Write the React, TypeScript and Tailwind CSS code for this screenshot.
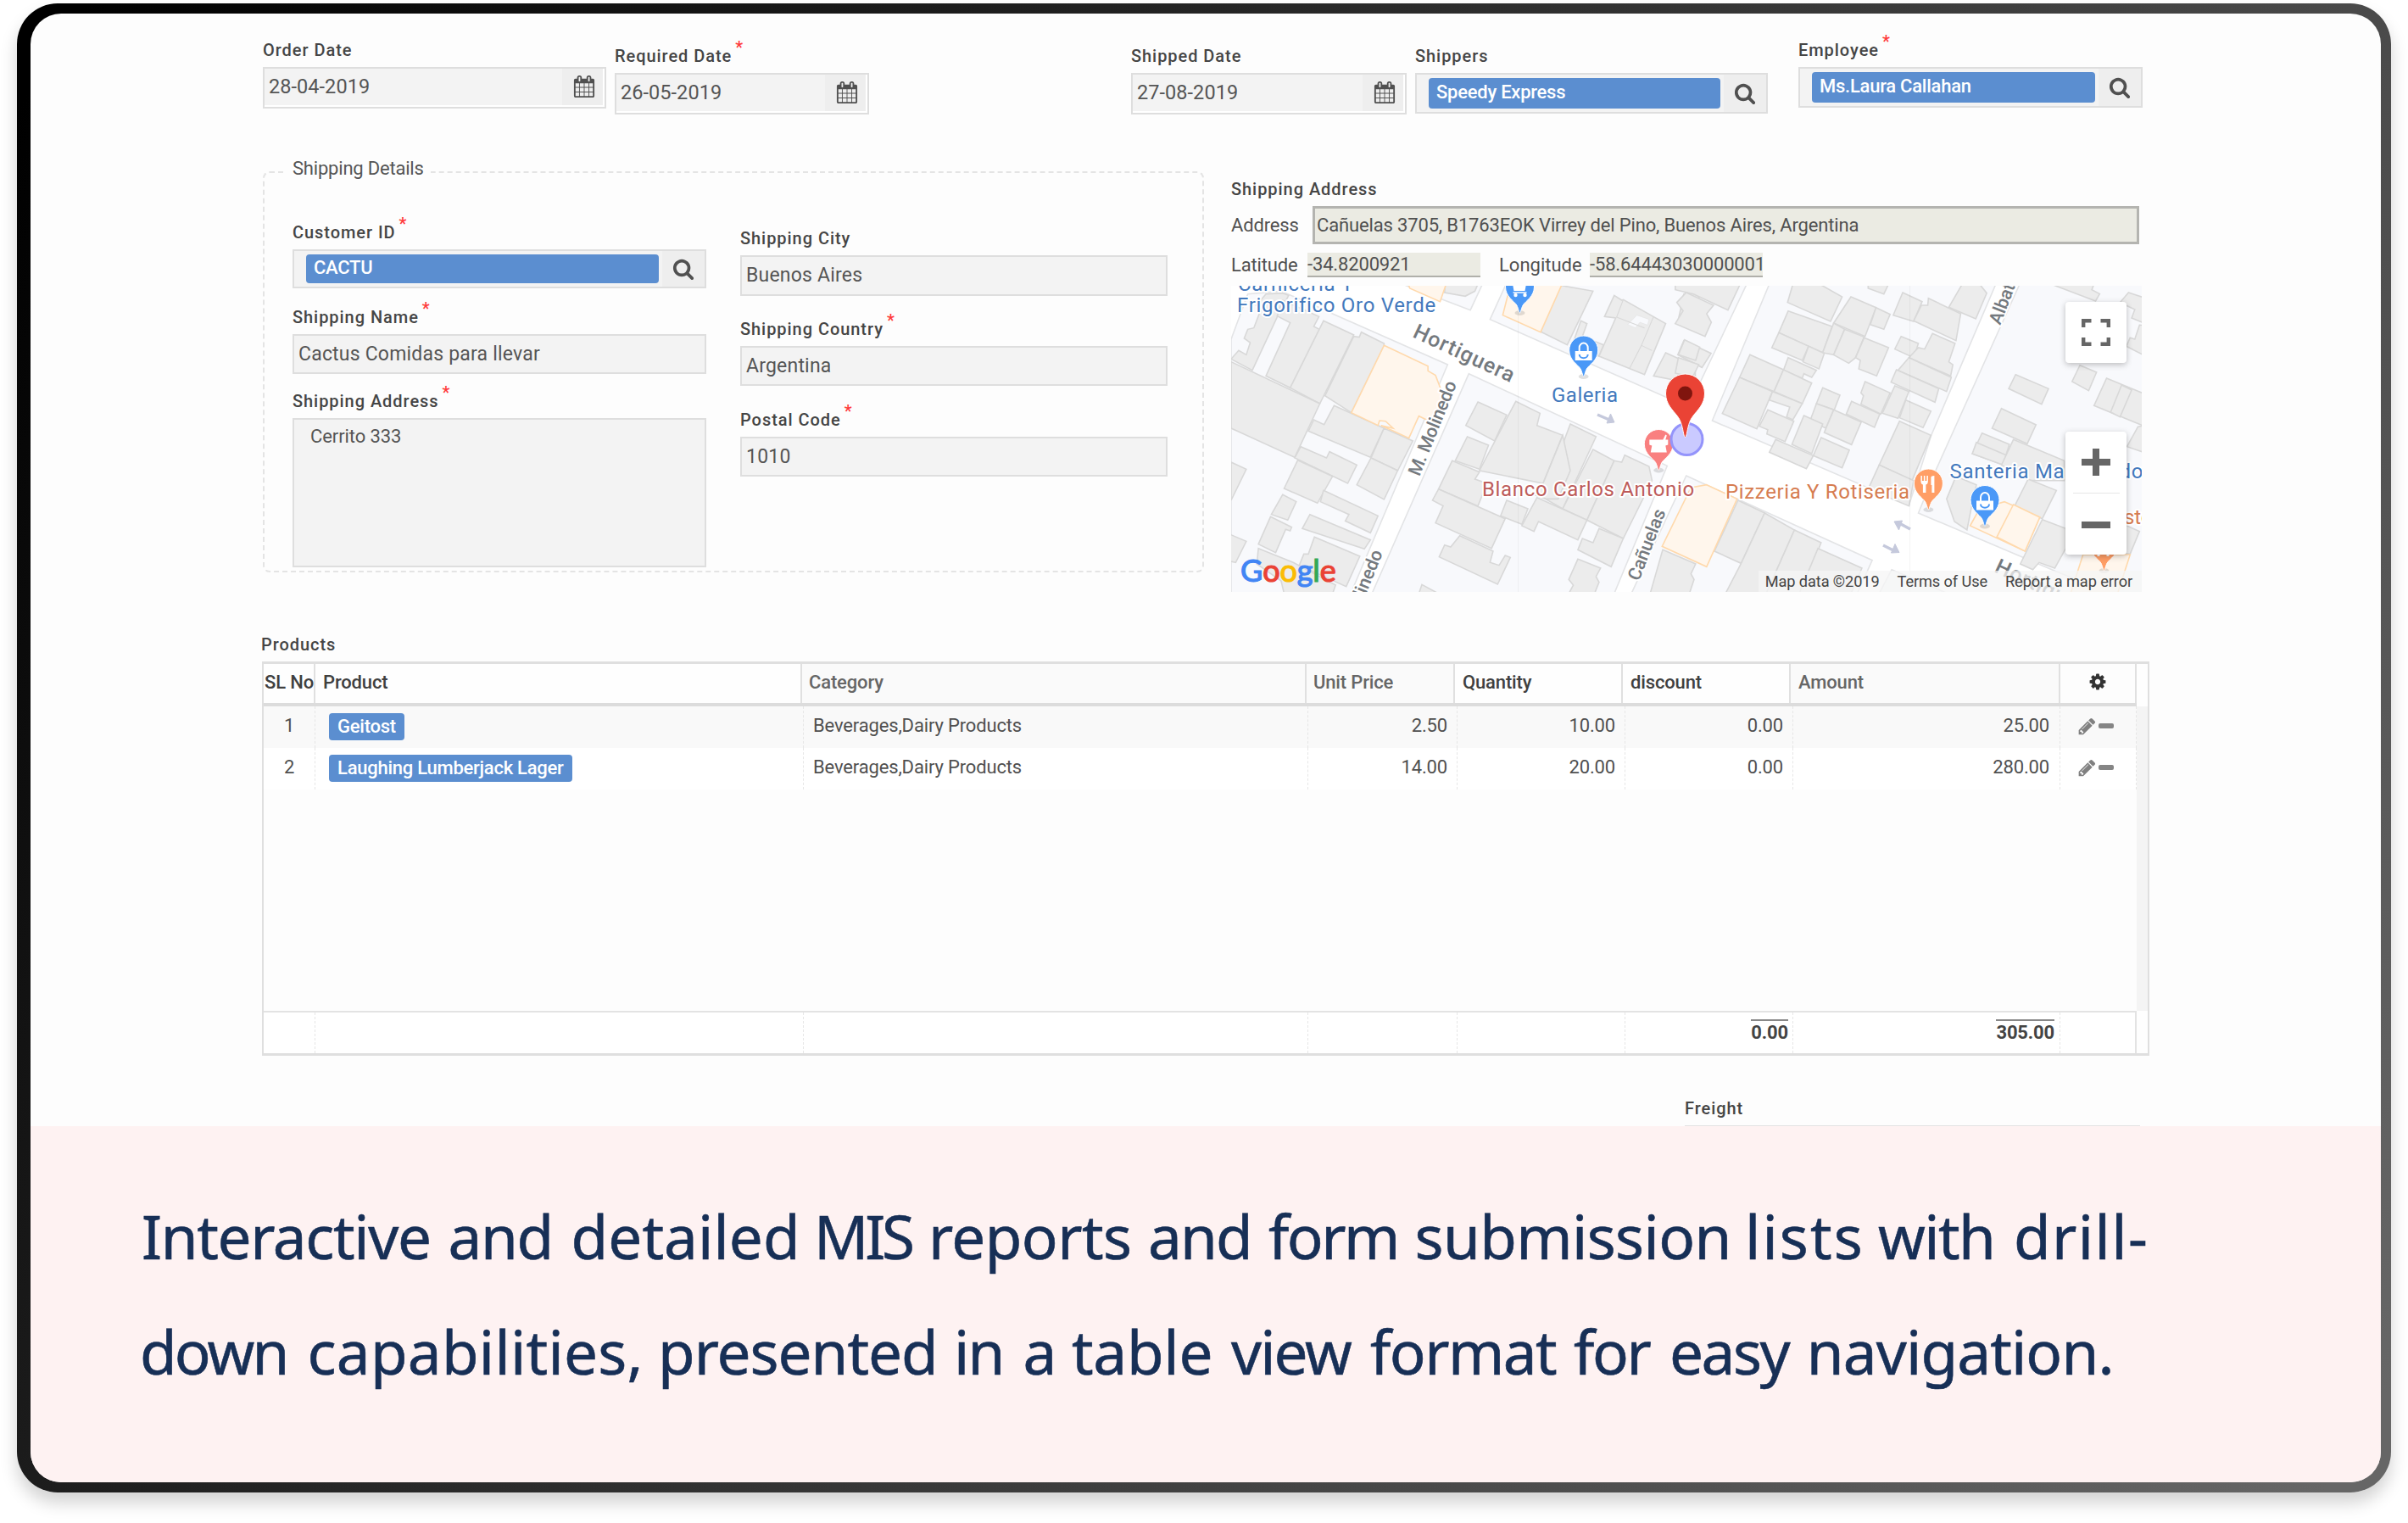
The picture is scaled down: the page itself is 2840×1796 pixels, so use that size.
import type { ReactNode } from "react";

const CALENDAR =
  "M192 1664h288v-288h-288v288zm352 0h320v-288h-320v288zm-352-352h288v-320h-288v320zm352 0h320v-320h-320v320zm-352-384h288v-288h-288v288zm736 736h320v-288h-320v288zm-384-736h320v-288h-320v288zm768 736h288v-288h-288v288zm-384-352h320v-320h-320v320zm-352-864v-288q0-13-9.5-22.5t-22.5-9.5h-64q-13 0-22.5 9.5t-9.5 22.5v288q0 13 9.5 22.5t22.5 9.5h64q13 0 22.5-9.5t9.5-22.5zm736 864h288v-320h-288v320zm-384-384h320v-288h-320v288zm384 0h288v-288h-288v288zm32-480v-288q0-13-9.5-22.5t-22.5-9.5h-64q-13 0-22.5 9.5t-9.5 22.5v288q0 13 9.5 22.5t22.5 9.5h64q13 0 22.5-9.5t9.5-22.5zm384-64v1280q0 52-38 90t-90 38h-1408q-52 0-90-38t-38-90v-1280q0-52 38-90t90-38h128v-96q0-66 47-113t113-47h64q66 0 113 47t47 113v96h384v-96q0-66 47-113t113-47h64q66 0 113 47t47 113v96h128q52 0 90 38t38 90z";
const SEARCH =
  "M1216 832q0-185-131.5-316.5t-316.5-131.5-316.5 131.5-131.5 316.5 131.5 316.5 316.5 131.5 316.5-131.5 131.5-316.5zm512 832q0 52-38 90t-90 38q-54 0-90-38l-343-342q-179 124-399 124-143 0-273.5-55.5t-225-150-150-225-55.5-273.5 55.5-273.5 150-225 225-150 273.5-55.5 273.5 55.5 225 150 150 225 55.5 273.5q0 220-124 399l343 343q37 37 37 90z";
const PENCIL =
  "M491 1536l91-91-235-235-91 91v107h128v128h107zm523-928q0-22-22-22-10 0-17 7l-542 542q-7 7-7 17 0 22 22 22 10 0 17-7l542-542q7-7 7-17zm-54-192l416 416-832 832h-416v-416zm683 96q0 53-37 90l-166 166-416-416 166-165q36-38 90-38 53 0 91 38l235 234q37 39 37 91z";
const COG =
  "M1152 896q0-106-75-181t-181-75-181 75-75 181 75 181 181 75 181-75 75-181zm512-109v222q0 12-8 23t-20 13l-185 28q-19 54-39 91 35 50 107 138 10 12 10 25t-9 23q-27 37-99 108t-94 71q-12 0-26-9l-138-108q-44 23-91 38-16 136-29 186-7 28-36 28h-222q-14 0-24.5-8.5t-11.5-21.5l-28-184q-49-16-90-37l-141 107q-10 9-25 9-14 0-25-11-126-114-165-168-7-10-7-23 0-12 8-23 15-21 51-66.5t54-70.5q-27-50-41-99l-183-27q-13-2-21-12.5t-8-23.5v-222q0-12 8-23t19-13l186-28q14-46 39-92-40-57-107-138-10-12-10-24 0-10 9-23 26-36 98.5-107.5t94.5-71.5q13 0 26 10l138 107q44-23 91-38 16-136 29-186 7-28 36-28h222q14 0 24.5 8.5t11.5 21.5l28 184q49 16 90 37l142-107q9-9 24-9 13 0 25 10 129 119 165 170 7 8 7 22 0 12-8 23-15 21-51 66.5t-54 70.5q26 50 41 98l183 28q13 2 21 12.5t8 23.5z";

function Glyph({ d, className }: { d: string; className: string }) {
  return (
    <svg viewBox="0 0 1792 1792" className={className} fill="currentColor">
      <path d={d} />
    </svg>
  );
}

function Label({ text, required }: { text: string; required?: boolean }) {
  return (
    <div className="h-6 text-[20px] leading-6 font-medium tracking-[0.95px] whitespace-nowrap text-[#454545]">
      {text}
      {required && <span className="relative -top-[10px] ml-[4px] text-[#ff3b3b]">*</span>}
    </div>
  );
}

function Field({ label, required, className, children }: { label: string; required?: boolean; className: string; children: ReactNode }) {
  return (
    <div className={`flex shrink-0 flex-col gap-2 ${className}`}>
      <Label text={label} required={required} />
      {children}
    </div>
  );
}

const boxBase = "flex border-2 border-[#dedede] bg-[#f3f3f3] text-[#555]";

function DateBox({ value }: { value: string }) {
  return (
    <div className={`${boxBase} h-[49px] pr-[2px] pb-[2px] shadow-[inset_-2px_-2px_0_#fff]`}>
      <span className="flex flex-1 items-center pt-[1px] pl-[5px] text-[23.5px] tracking-[0.05px]">{value}</span>
      <span className="flex w-12 items-center justify-center bg-[#eeeeee] pb-[1px] pl-[4px] text-[#505050]">
        <Glyph d={CALENDAR} className="size-[26px]" />
      </span>
    </div>
  );
}

function LookupBox({ value, className }: { value: string; className: string }) {
  return (
    <div className={`${boxBase} ${className}`}>
      <span className="my-[4px] mr-[4px] ml-[14px] flex flex-1 items-center rounded-[4px] bg-[#5b8ed0] pb-[3px] pl-[9px] text-[22px] font-medium tracking-[-0.25px] text-white">
        {value}
      </span>
      <span className="flex w-[50px] items-center justify-center bg-[#eeeeee] pb-[1px] text-[#505050]">
        <Glyph d={SEARCH} className="size-[26px]" />
      </span>
    </div>
  );
}

function TextBox({ value, className }: { value: string; className: string }) {
  return <div className={`${boxBase} items-center pt-[1px] pl-[5px] text-[23px] tracking-[0.2px] ${className}`}>{value}</div>;
}

function poly(points: string, key: number, fill: string, stroke: string) {
  return <polygon key={key} points={points} fill={fill} stroke={stroke} strokeWidth="1.6" vectorEffect="non-scaling-stroke" />;
}

const blocksWest = [
  "35,600 90,440 200,430 330,490 370,510 750,690 430,1500 35,1500",
  "820,722 1475,1048 1300,1500 500,1500",
  "600,405 825,497 865,405",
  "945,400 890,530 1545,840 1740,400",
];
const shopsWest = [
  "540,622 685,695 685,712 710,728 732,790 730,830 690,890 655,872 622,950 530,905 570,915 545,890 525,888 520,905 432,860",
  "620,405 745,405 725,467 625,420",
  "958,405 1128,405 1057,575 932,515",
];
const housesWest = [
  "35,670 60,640 85,655 98,612 78,597 90,565 110,560 135,490 118,480 150,440 205,437 225,445 190,515 105,710",
  "150,730 230,542 187,518 205,462 325,520 308,555 330,567 230,772",
  "340,535 440,585 328,828 230,772",
  "458,593 465,575 540,615 540,625 432,860 345,800 440,590",
  "35,680 328,828 245,1018 35,915",
  "375,835 540,915 495,1018 290,925 308,885 342,902",
  "540,915 635,960 585,1065 497,1020",
  "497,1020 585,1065 540,1167 450,1115",
  "265,980 350,1020 360,998 450,1045 420,1110 245,1020",
  "255,1028 370,1085 320,1180 210,1128",
  "340,1135 520,1225 495,1285 412,1243 424,1220 330,1175",
  "205,1150 250,1175 222,1240 168,1220",
  "165,1228 235,1265 230,1278 215,1273 182,1355 125,1325",
  "295,1220 495,1310 475,1342 270,1270",
  "310,1300 460,1368 415,1475 260,1400 275,1360 290,1360",
  "35,1035 85,1060 35,1170",
  "30,1290 85,1315 50,1390 30,1385",
  "125,1340 240,1390 380,1470 370,1500 210,1500 200,1455 120,1395",
  "742,405 850,405 840,430 808,448 740,435",
  "1125,405 1130,411 1230,430 1145,620 1057,573",
  "1190,535 1210,545 1195,590 1265,620 1250,660 1165,610",
  "1300,445 1325,462 1330,460 1470,545 1400,725 1250,660 1305,525 1268,520",
  "1495,405 1568,440 1640,405",
  "1560,430 1580,440 1580,575 1510,540 1530,440",
  "1530,605 1620,650 1590,700 1510,655",
  "1470,648 1568,695 1568,765 1500,745 1430,730",
  "850,822 945,868 905,960 810,905",
  "975,820 1055,862 1045,905 1130,940 1065,1110 855,1065",
  "1155,900 1240,945 1130,1200 1065,1160",
  "1230,990 1300,1030 1210,1240 1130,1200",
  "1335,1010 1415,1050 1425,1100 1330,1305 1210,1240 1300,1030 1325,1035",
  "1250,1270 1330,1305 1290,1405 1180,1345 1195,1305 1230,1320",
  "815,945 885,975 855,1060 775,1030",
  "765,1030 855,1070 840,1095 880,1110 850,1190 720,1130",
  "1130,940 1065,1110 1035,1150 1075,1165 1115,1165 1155,1065",
  "720,1130 940,1235 895,1340 710,1250 735,1190 700,1170",
  "945,1170 1015,1200 995,1255 925,1225",
  "1045,1160 1210,1240 1180,1310 1050,1245 1035,1280 995,1260",
  "790,1295 900,1350 890,1390 920,1400 940,1365 957,1372 915,1467 722,1370 740,1328 760,1335",
  "1180,1378 1255,1410 1240,1440 1250,1460 1235,1500 1150,1500 1165,1470 1150,1450",
  "665,1468 720,1500 655,1500",
];

const blocksEast = [
  "290,405 108,888 735,1188 806,940 1012,405",
  "1088,405 822,1060 765,1215 1200,1420 1380,1500 1500,1560 1500,405",
  "25,1083 618,1382 570,1500 -150,1500",
  "680,1415 860,1500 640,1500",
];
const shopsEast = [
  "90,1115 187,1165 90,1405 -52,1333 40,1125",
  "1040,1175 1152,1230 1105,1350 930,1260 960,1200",
  "1068,1185 1152,1230 1105,1350 1015,1300",
  "1290,1362 1440,1362 1400,1500 1250,1500",
];
const housesEast = [
  "-10,405 197,405 158,497 48,440 -10,425",
  "25,435 112,480 90,510 105,540 85,590 -10,545 15,500 -5,470",
  "20,602 68,628 55,675 0,655",
  "0,665 65,690 45,735 -10,720",
  "365,405 450,405 522,450 485,537 348,470",
  "605,405 670,405 655,440 605,420",
  "350,500 490,555 460,648 320,577",
  "320,577 415,625 395,675 298,630",
  "550,450 630,488 595,590 495,543",
  "630,488 675,512 655,565 612,548",
  "495,543 530,565 495,655 460,648",
  "530,565 592,592 565,665 543,685 495,655",
  "592,595 670,630 632,730 575,705 580,675 565,665",
  "415,625 465,650 448,705 397,680",
  "350,665 440,710 425,735 400,722 395,738 335,710",
  "228,655 335,708 305,785 195,735",
  "335,708 425,755 395,828 305,785",
  "195,735 300,785 250,917 140,863",
  "300,785 395,828 365,885 345,875 355,840 290,815",
  "285,850 368,890 340,962 282,935 285,920 258,908",
  "460,772 515,798 497,850 440,828",
  "440,828 495,850 470,915 420,888",
  "400,870 460,900 425,1005 362,972",
  "495,850 583,893 552,973 465,930",
  "455,948 545,992 522,1055 430,1012",
  "310,955 430,1012 408,1058 290,1000",
  "595,750 675,790 645,865 582,830 590,800 582,790",
  "552,820 642,865 625,912 535,865",
  "690,765 735,785 700,880 650,862",
  "725,815 805,855 780,913 705,878",
  "715,435 777,467 750,537 685,515",
  "797,455 900,510 885,605 750,535 775,480 795,480",
  "905,405 960,405 983,437 948,528 862,487",
  "710,590 765,615 750,665 690,635",
  "810,580 882,615 862,680 875,690 868,730 735,665 765,630 785,635",
  "735,665 870,735 855,785 700,710",
  "695,708 830,775 818,823 678,752",
  "705,890 805,940 745,1100 640,1045",
  "640,1045 750,1100 735,1190 605,1130",
  "1075,725 1180,775 1158,830 1053,775",
  "1030,845 1140,903 1112,970 1000,915",
  "968,932 1055,972 1035,1045 937,1005",
  "950,965 1045,1010 1035,1045 937,1005",
  "1068,955 1230,1030 1230,1100 1120,1100 1030,1045",
  "1280,692 1333,717 1308,782 1255,750",
  "1365,738 1490,795 1490,910 1325,835",
  "1413,762 1445,780 1408,875 1378,858",
  "1200,405 1325,405 1318,425 1343,440 1330,465 1195,408",
  "1435,435 1490,455 1490,545 1445,525 1455,495 1408,470",
  "1470,550 1490,552 1490,660 1428,625 1440,595 1455,600",
  "1465,910 1490,905 1490,1003 1430,980",
  "885,1085 950,1115 935,1190 920,1275 880,1245 855,1165",
  "1115,1095 1205,1135 1160,1235 1072,1190",
  "1160,1238 1235,1270 1235,1340 1200,1410 1150,1390 1130,1415 1090,1395 1110,1350",
  "1380,1235 1470,1280 1440,1360 1380,1350",
  "190,1170 275,1215 200,1393 115,1350",
  "275,1215 370,1275 280,1500 150,1500 200,1393",
  "370,1275 455,1320 390,1500 280,1500",
  "445,1340 585,1410 550,1500 385,1500",
  "-50,1345 55,1395 40,1430 50,1450 35,1500 -90,1500",
];

function Pin({ x, y, color, children }: { x: number; y: number; color: string; children?: ReactNode }) {
  return (
    <g transform={`translate(${x} ${y})`}>
      <ellipse cx="0" cy="31" rx="6" ry="3" fill="#000" opacity="0.12" />
      <path
        d="M0 31C-1 31-1.6 26-3.6 22C-6.6 17-17 12-17 0A17 17 0 0 1 17 0C17 12 6.6 17 3.6 22C1.6 26 1 31 0 31Z"
        fill={color}
        stroke="#fff"
        strokeWidth="1"
      />
      {children}
    </g>
  );
}

const bag = (
  <g>
    <path d="M-10 1H10V12H-10Z" fill="#fff" />
    <path d="M-5 2V-3A5 5.500 0 0 1 5 -3V2" fill="none" stroke="#fff" strokeWidth="2" />
    <path d="M-5 5A5 4.200 0 0 0 5 5" fill="none" stroke="#4a98f7" strokeWidth="2" />
  </g>
);

function CityMap() {
  return (
    <svg width="1074" height="361" viewBox="0 0 1074 361" className="block font-[Roboto]">
      <rect width="1074" height="361" fill="#ffffff" />
      <g transform="translate(-12.5 -137) scale(0.35714 0.33333)">
        {blocksWest.map((p, i) => poly(p, i, "#f8f9fc", "#e3e4e6"))}
        {housesWest.map((p, i) => poly(p, i, "#ececec", "#d8d8d8"))}
        {shopsWest.map((p, i) => poly(p, i, "#fff6ec", "#ffd9ac"))}
        <polygon points="1375,515 1415,530 1410,550 1385,540 1370,560 1345,548" fill="#f8f9fc" stroke="#d8d8d8" />
        <path d="M1330 460L1308 522L1400 560M1430 520L1390 622L1425 640M1390 622L1350 705M1130 940L1065 1110" fill="none" stroke="#d8d8d8" strokeWidth="3" />
      </g>
      <g transform="translate(527.5 -137) scale(0.36996 0.33333)">
        {blocksEast.map((p, i) => poly(p, i, "#f8f9fc", "#e3e4e6"))}
        {housesEast.map((p, i) => poly(p, i, "#ececec", "#d8d8d8"))}
        {shopsEast.map((p, i) => poly(p, i, "#fff6ec", "#ffd9ac"))}
      </g>
      <g stroke="#000" strokeOpacity="0.04">
        <path d="M338.500 0V361M800.500 0V361" />
      </g>
      <g fill="#c5c9dc" stroke="#c5c9dc">
        <path d="M432 152L446 158" strokeWidth="3.500" />
        <path d="M452 161L443 162L447.500 151Z" />
        <path d="M801 287L788 280" strokeWidth="3.500" />
        <path d="M782 278L791.500 277L787.500 288Z" />
        <path d="M769 306L781 312" strokeWidth="3.500" />
        <path d="M788 314.500L778.500 315L783 304.500Z" />
      </g>
      <Pin x={340.5} y={1} color="#4a98f7">
        <path d="M-9 -6H8L6 5H-7Z" fill="#fff" />
        <circle cx="-5" cy="10" r="2.200" fill="#fff" />
        <circle cx="6" cy="10" r="2.200" fill="#fff" />
        <path d="M-8 7H8" stroke="#fff" strokeWidth="1.500" />
      </Pin>
      <Pin x={415.7} y={76} color="#4a98f7">
        {bag}
      </Pin>
      <Pin x={504.3} y={186.5} color="#f98080">
        <path d="M-11 -5H5L8 -11L9.500 -10L8 -5H11V1L8 2L9.500 10H-9.500L-8 2L-11 1Z" fill="#fff" />
      </Pin>
      <circle cx="537.5" cy="181" r="18.500" fill="#8080ff" fillOpacity="0.42" stroke="#9494fb" strokeWidth="3" />
      <Pin x={822.4} y={233} color="#ff9e66">
        <path d="M-9 -9V-3Q-9 1 -6.500 1.500V11H-3V1.500Q-0.500 1 -0.500 -3V-9H-2V-3H-4V-9H-5.500V-3H-7.500V-9ZM3 -7Q3 -9 7 -9V11H4V2H3Z" fill="#fff" />
      </Pin>
      <Pin x={889} y={252.5} color="#4a98f7">
        {bag}
      </Pin>
      <Pin x={1029.5} y={305} color="#ff9e66">
        <path d="M-8 -9V14H-5V-9ZM3 -9V14H6V-9Z" fill="#fff" />
      </Pin>
      <path
        d="M535.500 178.500C533 178.500 533.500 163 526.500 154C521.500 147 512.500 140 512.500 127A23 23 0 0 1 558.500 127C558.500 140 549.500 147 544.500 154C537.500 163 538 178.500 535.500 178.500Z"
        fill="#ea4335"
        stroke="#fff"
        strokeWidth="1"
      />
      <circle cx="535.500" cy="127" r="8.500" fill="#80150e" />
      <g paintOrder="stroke" stroke="#fff" strokeWidth="4" strokeLinejoin="round" fontSize="24">
        <g fill="#4379bd" letterSpacing="0.7">
          <text x="8" y="6">Carniceria Y</text>
          <text x="7" y="30.500">Frigorifico Oro Verde</text>
          <text x="378" y="136.500" letterSpacing="0.5">Galeria</text>
          <text x="847.500" y="226.500">Santeria Ma</text>
          <text x="1047.500" y="226.500">do</text>
        </g>
        <text x="296" y="247.500" fill="#bd5b5a" letterSpacing="0.66">Blanco Carlos Antonio</text>
        <text x="583" y="250.500" fill="#d67c50" letterSpacing="0.64">Pizzeria Y Rotiseria</text>
        <text x="1053" y="281" fill="#d67c50">sto</text>
        <g fill="#74797e" fontWeight="500">
          <text transform="translate(213 60) rotate(25)" fontSize="25" letterSpacing="1">Hortiguera</text>
          <text transform="translate(222 225.500) rotate(-68)" fontSize="21.500">M. Molinedo</text>
          <text transform="translate(481 349) rotate(-69)" fontSize="21.500">Cañuelas</text>
          <text transform="translate(179 315) rotate(-68)" fontSize="21.500" textAnchor="end">M. Molinedo</text>
          <text transform="translate(907 47) rotate(-69)" fontSize="21.500">Albatros</text>
          <text transform="translate(899 337) rotate(25)" fontSize="25" letterSpacing="1">Hortiguera</text>
        </g>
      </g>
    </svg>
  );
}

function MapPanel() {
  return (
    <div className="relative mt-[10px] h-[361px] w-[1074px] overflow-hidden">
      <CityMap />
      <div className="absolute bottom-[4px] left-[11px] flex text-[36px] leading-[44px] font-[Lato] [-webkit-text-stroke:1.2px_currentColor]">
        <span className="text-[#4285f4]">G</span>
        <span className="text-[#ea4335]">o</span>
        <span className="text-[#fbbc05]">o</span>
        <span className="text-[#4285f4]">g</span>
        <span className="text-[#34a853]">l</span>
        <span className="text-[#ea4335]">e</span>
      </div>
      <div className="absolute right-0 bottom-0 flex h-[25px] items-center gap-[21px] bg-[#f5f5f5]/75 pr-[11px] pl-[8px] text-[18.2px] tracking-[-0.1px] text-[#444]">
        <span>Map data ©2019</span>
        <span>Terms of Use</span>
        <span>Report a map error</span>
      </div>
      <div className="absolute top-[19px] left-[984px] flex h-[72px] w-[72px] items-center justify-center rounded-[4px] bg-white shadow-[0_2px_7px_rgba(0,0,0,0.25)]">
        <svg width="34" height="32" viewBox="0 0 34 32" fill="none" stroke="#666" strokeWidth="4.400">
          <path d="M2.200 10V2.200H11.500M22.500 2.200H31.800V10M31.800 22V29.800H22.500M11.500 29.800H2.200V22" />
        </svg>
      </div>
      <div className="absolute top-[172px] left-[984px] flex h-[145px] w-[72px] flex-col items-center rounded-[4px] bg-white shadow-[0_2px_7px_rgba(0,0,0,0.25)]">
        <div className="flex h-[72px] items-center">
          <svg width="34" height="32" viewBox="0 0 34 32" stroke="#666" strokeWidth="8">
            <path d="M0 16H34M17 0V32" />
          </svg>
        </div>
        <div className="h-[1px] w-[55px] bg-[#e6e6e6]" />
        <div className="flex flex-1 items-center pt-[1px]">
          <div className="h-[8px] w-[34px] bg-[#666]" />
        </div>
      </div>
    </div>
  );
}

const headCells = [
  { text: "SL No", cell: "w-[61px] pl-[1px]", bold: true },
  { text: "Product", cell: "w-[574px] pl-[9px]", bold: true },
  { text: "Category", cell: "w-[595px] pl-[8px] bg-[#fafafa]", bold: false },
  { text: "Unit Price", cell: "w-[175px] pl-[8px] bg-[#fafafa]", bold: false },
  { text: "Quantity", cell: "w-[198px] pl-[9px]", bold: true },
  { text: "discount", cell: "w-[198px] pl-[9px]", bold: true },
  { text: "Amount", cell: "w-[318px] pl-[9px] bg-[#fafafa]", bold: false },
];

const rows = [
  { no: "1", product: "Geitost", category: "Beverages,Dairy Products", price: "2.50", qty: "10.00", discount: "0.00", amount: "25.00", tone: "bg-[#f9f9f9]" },
  { no: "2", product: "Laughing Lumberjack Lager", category: "Beverages,Dairy Products", price: "14.00", qty: "20.00", discount: "0.00", amount: "280.00", tone: "bg-white" },
];

const bodyCell = "flex shrink-0 items-center border-r border-dashed border-[#e6e6e6]";
const numCell = "flex shrink-0 items-center justify-end border-r border-dashed border-[#e6e6e6] pb-[5px]";

function ProductsTable() {
  return (
    <div className="ml-[273px] flex h-[465px] w-[2226px] border-t-[3px] border-r-2 border-b-[3px] border-l-2 border-[#dfdfdf] text-[22px] tracking-[-0.15px] text-[#505050]">
      <div className="flex w-[2209px] shrink-0 flex-col">
        <div className="flex h-[50px] shrink-0 border-b-[4px] border-[#dcdcdc]">
          {headCells.map((h) => (
            <div
              key={h.text}
              className={`flex shrink-0 items-center border-r-2 border-[#e0e0e0] pb-[3px] whitespace-nowrap ${h.cell} ${h.bold ? "bg-[#fefefe] font-medium text-[#404040]" : "font-medium text-[#666]"}`}
            >
              {h.text}
            </div>
          ))}
          <div className="flex flex-1 items-center justify-center border-r-2 border-[#e0e0e0] pb-[4px] text-[#333]">
            <Glyph d={COG} className="size-[22px]" />
          </div>
        </div>
        {rows.map((r) => (
          <div key={r.no} className={`flex h-[49px] shrink-0 ${r.tone}`}>
            <div className={`${bodyCell} w-[61px] justify-center pb-[5px]`}>{r.no}</div>
            <div className={`${bodyCell} w-[576px] pb-[2px] pl-[16px]`}>
              <span className="flex h-8 items-center rounded-[4px] bg-[#5b8ed0] px-[10px] font-medium tracking-[-0.25px] text-white">{r.product}</span>
            </div>
            <div className={`${bodyCell} w-[595px] pb-[5px] pl-[11px]`}>{r.category}</div>
            <div className={`${numCell} w-[176px] pr-[11px]`}>{r.price}</div>
            <div className={`${numCell} w-[198px] pr-[11px]`}>{r.qty}</div>
            <div className={`${numCell} w-[198px] pr-[11px]`}>{r.discount}</div>
            <div className={`${numCell} w-[315px] pr-[12px]`}>{r.amount}</div>
            <div className="flex flex-1 items-center gap-[2px] border-r border-dashed border-[#e6e6e6] pb-[3px] pl-[20px] text-[#808080]">
              <Glyph d={PENCIL} className="size-[23px]" />
              <span className="h-[6px] w-[18px] rounded-[2px] bg-[#858585]" />
            </div>
          </div>
        ))}
        <div className="flex-1" />
        <div className="flex h-[50px] shrink-0 border-t-2 border-r-2 border-[#e3e3e3] bg-white font-bold text-[#444]">
          <div className={`${bodyCell} w-[61px]`} />
          <div className={`${bodyCell} w-[576px]`} />
          <div className={`${bodyCell} w-[595px]`} />
          <div className={`${bodyCell} w-[176px]`} />
          <div className={`${bodyCell} w-[198px]`} />
          <div className={`${bodyCell} w-[198px] items-start justify-end pt-[8px] pr-[5px]`}>
            <span className="border-t-2 border-[#888] leading-[28px]">0.00</span>
          </div>
          <div className={`${bodyCell} w-[315px] items-start justify-end pt-[8px] pr-[6px]`}>
            <span className="border-t-2 border-[#888] leading-[28px]">305.00</span>
          </div>
        </div>
      </div>
      <div className="flex flex-1 flex-col">
        <div className="h-[50px] bg-[#fefefe]" />
        <div className="flex-1 bg-[#f4f4f4]" />
        <div className="h-[50px] bg-[#fefefe]" />
      </div>
    </div>
  );
}

const captionTop = [
  { word: "Interactive ", fit: "w-[361.5px] tracking-[-1.35px]" },
  { word: "and ", fit: "w-[145px] tracking-[-1.35px]" },
  { word: "detailed ", fit: "w-[286.5px] tracking-[0.09px]" },
  { word: "MIS ", fit: "w-[135px] tracking-[-4.2px]" },
  { word: "reports ", fit: "w-[259px] tracking-[-0.59px]" },
  { word: "and ", fit: "w-[142px] tracking-[-1.8px]" },
  { word: "form ", fit: "w-[172.5px] tracking-[-2.57px]" },
  { word: "submission ", fit: "w-[389.5px] tracking-[-0.62px]" },
  { word: "lists ", fit: "w-[157px] tracking-[2.1px]" },
  { word: "with ", fit: "w-[160px] tracking-[-1.59px]" },
  { word: "drill-", fit: "tracking-[1.4px]" },
];
const captionBottom = [
  { word: "down ", fit: "w-[197.5px] tracking-[-2.84px]" },
  { word: "capabilities, ", fit: "w-[413.6px] tracking-[0.25px]" },
  { word: "presented ", fit: "w-[348.8px] tracking-[-1.03px]" },
  { word: "in ", fit: "w-[81.6px] tracking-[-1.72px]" },
  { word: "a ", fit: "w-[57.4px]" },
  { word: "table ", fit: "w-[188.2px] tracking-[-0.21px]" },
  { word: "view ", fit: "w-[163.9px] tracking-[-2px]" },
  { word: "format ", fit: "w-[240px] tracking-[-1.58px]" },
  { word: "for ", fit: "w-[113px] tracking-[-2.44px]" },
  { word: "easy ", fit: "w-[161.9px] tracking-[-2.46px]" },
  { word: "navigation.", fit: "tracking-[-0.88px]" },
];

function CaptionLine({ words, className }: { words: { word: string; fit: string }[]; className: string }) {
  return (
    <p className={`flex h-[136px] whitespace-pre ${className}`}>
      {words.map((w, i) => (
        <span key={i} className={`shrink-0 ${w.fit}`}>
          {w.word}
        </span>
      ))}
    </p>
  );
}

export default function App() {
  return (
    <div className="h-[1796px] w-[2840px] overflow-hidden bg-white pt-1 pl-5 font-[Roboto,sans-serif]">
      <div className="h-[1756px] w-[2800px] rounded-[48px] bg-[linear-gradient(122deg,#000_2%,#666_98%)] pt-3 pr-3 pb-3 pl-4 shadow-[0_12px_20px_rgba(0,0,0,0.18)]">
        <div className="flex h-full flex-col overflow-hidden rounded-[36px] bg-[#fdfdfd]">
          <div className="h-[1312px] shrink-0">
            <div className="flex h-[174px] items-start pt-[31px] pl-[274px]">
              <Field label="Order Date" className="w-[405px]">
                <DateBox value="28-04-2019" />
              </Field>
              <Field label="Required Date" required className="mt-[7px] ml-[10px] w-[300px]">
                <DateBox value="26-05-2019" />
              </Field>
              <Field label="Shipped Date" className="mt-[7px] ml-[309px] w-[325px]">
                <DateBox value="27-08-2019" />
              </Field>
              <Field label="Shippers" className="mt-[7px] ml-[10px] w-[416px]">
                <LookupBox value="Speedy Express" className="h-12" />
              </Field>
              <Field label="Employee" required className="ml-[36px] w-[406px]">
                <LookupBox value="Ms.Laura Callahan" className="h-12" />
              </Field>
            </div>

            <div className="flex h-[542px] items-start pl-[274px]">
              <div className="mt-[12px] flex h-[473px] w-[1110px] flex-col rounded-[8px] border-2 border-dashed border-[#e4e4e4]">
                <div className="-mt-[20px] ml-[25px] h-[30px] w-fit bg-[#fdfdfd] px-[8px] text-[22px] leading-[29px] tracking-[-0.2px] text-[#555]">
                  Shipping Details
                </div>
                <div className="flex gap-[40px] pl-[33px]">
                  <div className="flex w-[488px] flex-col pt-[48px]">
                    <Field label="Customer ID" required className="w-full">
                      <LookupBox value="CACTU" className="h-[46px]" />
                    </Field>
                    <Field label="Shipping Name" required className="mt-[22px] w-full">
                      <TextBox value="Cactus Comidas para llevar" className="h-[47px]" />
                    </Field>
                    <Field label="Shipping Address" required className="mt-[20px] w-full">
                      <div className={`${boxBase} h-[176px] pt-[6px] pl-[19px] text-[22px] leading-[28px] tracking-[-0.1px]`}>Cerrito 333</div>
                    </Field>
                  </div>
                  <div className="flex w-[504px] flex-col pt-[55px]">
                    <Field label="Shipping City" className="w-full">
                      <TextBox value="Buenos Aires" className="h-[48px]" />
                    </Field>
                    <Field label="Shipping Country" required className="mt-[27px] w-full">
                      <TextBox value="Argentina" className="h-[47px]" />
                    </Field>
                    <Field label="Postal Code" required className="mt-[28px] w-full">
                      <TextBox value="1010" className="h-[47px]" />
                    </Field>
                  </div>
                </div>
              </div>

              <div className="ml-[32px] flex w-[1074px] flex-col pt-[21px] text-[22px] tracking-[-0.15px] text-[#505050]">
                <Label text="Shipping Address" />
                <div className="mt-[8px] flex h-[45px] items-center">
                  <span className="w-[96px] pb-[1px]">Address</span>
                  <div className="flex h-[45px] w-[975px] items-center border-[3px] border-[#b4b4b0] bg-[#ebebe3] pb-[1px] pl-[2px] whitespace-nowrap">
                    Cañuelas 3705, B1763EOK Virrey del Pino, Buenos Aires, Argentina
                  </div>
                </div>
                <div className="mt-[10px] flex h-[29px] items-center">
                  <span className="w-[90px]">Latitude</span>
                  <div className="flex h-[29px] w-[204px] items-center border-b-2 border-[#b0b0aa] bg-[#ebebe3] pb-[1px]">-34.8200921</div>
                  <span className="ml-[22px] w-[107px] tracking-normal">Longitude</span>
                  <div className="flex h-[29px] w-[204px] items-center border-b-2 border-[#b0b0aa] bg-[#ebebe3] pb-[1px]">-58.64443030000001</div>
                </div>
                <MapPanel />
              </div>
            </div>

            <div className="mt-[16px] mb-[8px] ml-[272px]">
              <Label text="Products" />
            </div>
            <ProductsTable />
            <div className="mt-[50px] ml-[1951px] flex h-[33px] w-[537px] flex-col border-b border-[#e2e2e2]">
              <Label text="Freight" />
            </div>
          </div>

          <div className="flex-1 bg-[#fef2f2] pt-[62px] text-[71px] leading-[136px] text-[#172f56] font-['Noto_Sans',sans-serif] [-webkit-text-stroke:0.6px_#172f56]">
            <CaptionLine words={captionTop} className="ml-[131px]" />
            <CaptionLine words={captionBottom} className="ml-[129px]" />
          </div>
        </div>
      </div>
    </div>
  );
}
